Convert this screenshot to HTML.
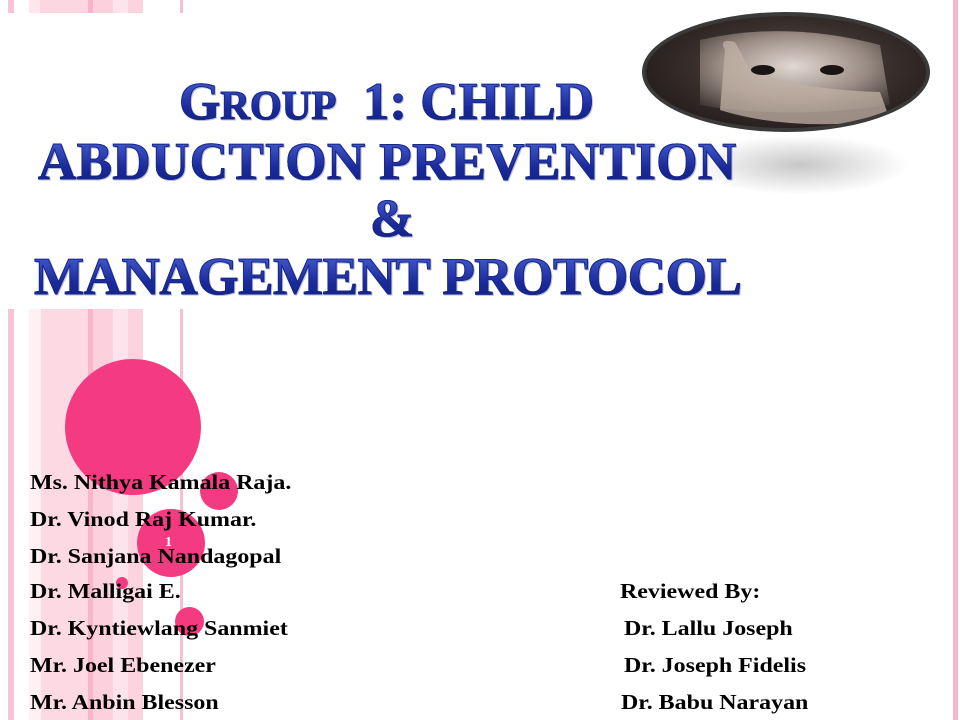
<!DOCTYPE html>
<html><head><meta charset="utf-8"><style>
body{margin:0;width:960px;height:720px;position:relative;overflow:hidden;background:#fff;font-family:"Liberation Serif",serif}
.s{position:absolute}
.t{position:absolute;white-space:nowrap;font-weight:bold;font-size:53px;line-height:1;
 background:linear-gradient(#4a63d6,#1a2a9a 60%,#0f1f80);-webkit-background-clip:text;background-clip:text;color:transparent;
 -webkit-text-stroke:1px #1a2788;filter:drop-shadow(1px 1px 0 rgba(120,130,180,.5))}
.n{position:absolute;font-weight:bold;font-size:21px;line-height:1;white-space:nowrap;color:#000;transform:scaleX(1.14);transform-origin:0 0}
.c{position:absolute;border-radius:50%;background:#f43a80}
</style></head><body>
<div class="s" style="left:8px;top:0;width:6px;height:13px;background:#fbc3d3"></div>
<div class="s" style="left:29px;top:0;width:14px;height:13px;background:#fde6ee"></div>
<div class="s" style="left:40px;top:0;width:48px;height:13px;background:#fcd6e1"></div>
<div class="s" style="left:88px;top:0;width:5px;height:13px;background:#f9b3c8"></div>
<div class="s" style="left:93px;top:0;width:20px;height:13px;background:#fcd0dc"></div>
<div class="s" style="left:113px;top:0;width:15px;height:13px;background:#fde4ec"></div>
<div class="s" style="left:128px;top:0;width:15px;height:13px;background:#fcd3df"></div>
<div class="s" style="left:180px;top:0;width:3px;height:13px;background:#fbbdd0"></div>
<div class="s" style="left:8px;top:309px;width:6px;height:411px;background:#fbc3d3"></div>
<div class="s" style="left:29px;top:309px;width:12px;height:411px;background:#fef0f4"></div>
<div class="s" style="left:41px;top:309px;width:47px;height:411px;background:#fdd9e3"></div>
<div class="s" style="left:88px;top:309px;width:5px;height:411px;background:#f9b6ca"></div>
<div class="s" style="left:93px;top:309px;width:20px;height:411px;background:#fcd0dc"></div>
<div class="s" style="left:113px;top:309px;width:15px;height:411px;background:#fde4ec"></div>
<div class="s" style="left:128px;top:309px;width:15px;height:411px;background:#fcd3df"></div>
<div class="s" style="left:180px;top:309px;width:3px;height:411px;background:#fbbdd0"></div>
<div class="s" style="left:953px;top:0;width:5px;height:720px;background:#f7b7cb"></div>
<div class="c" style="left:65px;top:359px;width:136px;height:136px"></div>
<div class="c" style="left:200px;top:472px;width:38px;height:38px"></div>
<div class="c" style="left:137px;top:509px;width:68px;height:68px"></div>
<div class="c" style="left:116px;top:577px;width:12px;height:12px"></div>
<div class="c" style="left:175px;top:607px;width:29px;height:29px"></div>
<div class="s" style="left:165px;top:535px;color:#fff;font-size:14px;font-weight:bold">1</div>
<div class="s" style="left:690px;top:135px;width:220px;height:60px;border-radius:50%;background:radial-gradient(ellipse,rgba(0,0,0,.22),rgba(0,0,0,0) 70%)"></div>
<svg class="s" style="left:640px;top:10px" width="295" height="125" viewBox="0 0 295 125">
<defs>
<radialGradient id="f" cx="0.52" cy="0.45" r="0.5"><stop offset="0" stop-color="#e2d8d2"/><stop offset="0.5" stop-color="#9a8c84"/><stop offset="1" stop-color="#221c1a"/></radialGradient>
<clipPath id="e"><ellipse cx="146" cy="62" rx="140" ry="56"/></clipPath>
</defs>
<ellipse cx="146" cy="62" rx="144" ry="60" fill="#3a3a3a"/>
<g clip-path="url(#e)">
<rect width="295" height="125" fill="url(#f)"/>
<path d="M0 0 H295 V125 H0Z M60 30 Q146 10 240 35 L250 95 Q146 110 60 95Z" fill="#2a2220" fill-rule="evenodd" opacity=".8"/>
<path d="M85 40 Q78 28 95 32 L110 60 Q160 80 240 82 L250 110 Q150 122 80 100 Z" fill="#c2b2a6" opacity=".75"/>
<ellipse cx="123" cy="60" rx="12" ry="5" fill="#1a1412"/>
<ellipse cx="192" cy="60" rx="12" ry="5" fill="#1a1412"/>
</g>
</svg>
<div class="t" style="left:179px;top:76px;font-size:53px">G<span style="font-size:41px">ROUP</span>&nbsp; 1: CHILD</div>
<div class="t" style="left:38px;top:136px;letter-spacing:0.4px">ABDUCTION PREVENTION</div>
<div class="t" style="left:370px;top:193px">&amp;</div>
<div class="t" style="left:34px;top:251px;letter-spacing:-0.4px">MANAGEMENT PROTOCOL</div>
<div class="n" style="left:30px;top:472px">Ms. Nithya Kamala Raja.</div>
<div class="n" style="left:30px;top:509px">Dr. Vinod Raj Kumar.</div>
<div class="n" style="left:30px;top:546px">Dr. Sanjana Nandagopal</div>
<div class="n" style="left:30px;top:581px">Dr. Malligai E.</div>
<div class="n" style="left:30px;top:618px">Dr. Kyntiewlang Sanmiet</div>
<div class="n" style="left:30px;top:655px">Mr. Joel Ebenezer</div>
<div class="n" style="left:30px;top:692px">Mr. Anbin Blesson</div>
<div class="n" style="left:620px;top:581px">Reviewed By:</div>
<div class="n" style="left:624px;top:618px">Dr. Lallu Joseph</div>
<div class="n" style="left:624px;top:655px">Dr. Joseph Fidelis</div>
<div class="n" style="left:621px;top:692px">Dr. Babu Narayan</div>
</body></html>
